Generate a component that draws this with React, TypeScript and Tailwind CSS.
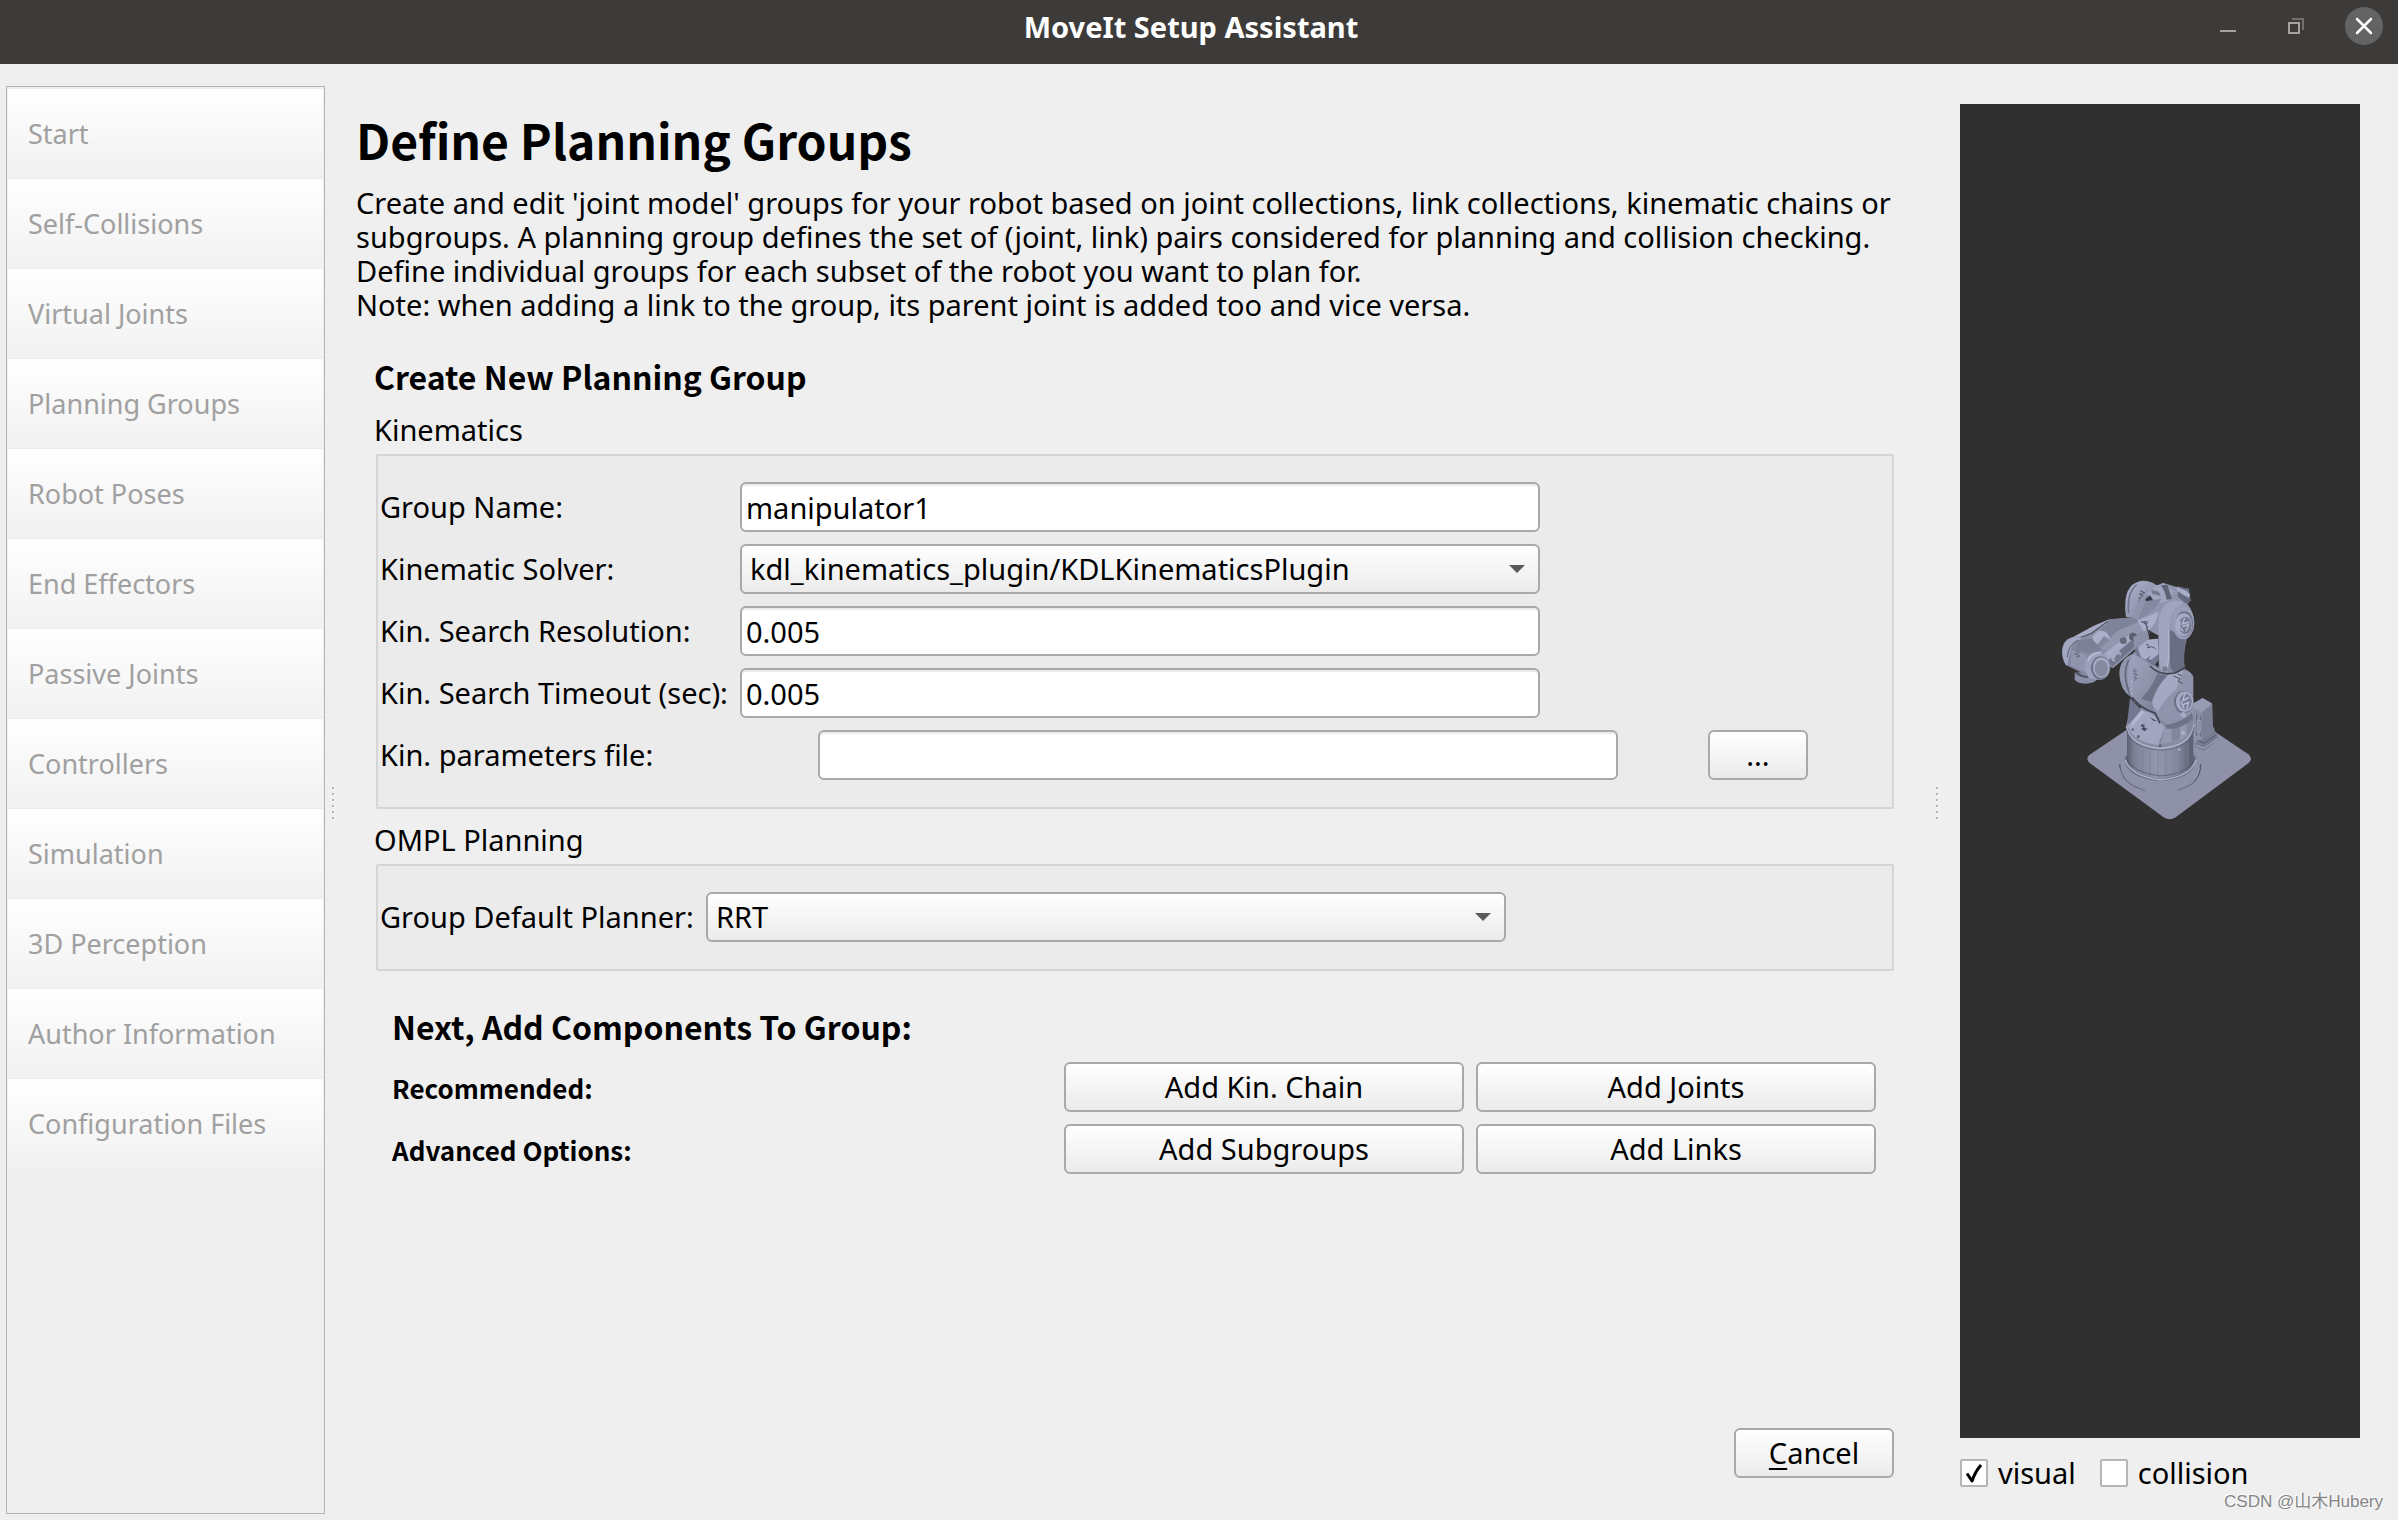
import React, { useState } from "react";

const steps = [
  "Start",
  "Self-Collisions",
  "Virtual Joints",
  "Planning Groups",
  "Robot Poses",
  "End Effectors",
  "Passive Joints",
  "Controllers",
  "Simulation",
  "3D Perception",
  "Author Information",
  "Configuration Files",
];

const solvers = [
  "kdl_kinematics_plugin/KDLKinematicsPlugin",
  "cached_ik_kinematics_plugin/CachedKDLKinematicsPlugin",
];

const planners = ["RRT", "RRTConnect", "RRTstar", "PRM"];

const headingFont = "font-['Noto_Sans_CJK_SC',sans-serif] font-bold";
const raised =
  "rounded-md border-2 border-[#a9a9a9] bg-linear-to-b from-white to-[#ebebeb]";
const field =
  "h-[50px] w-full max-w-[800px] rounded-md border-2 border-[#a9a9a9] bg-white px-1 shadow-[inset_0_2px_0_#ececec]";
const panel =
  "ml-0.5 rounded-xs border-2 border-[#d5d5d5] bg-[#ebebeb] px-0.5 pt-[26px] pb-[27px]";

const TitleBar = () => (
  <header className="grid h-16 grid-cols-[1fr_auto_1fr] items-start bg-[#3d3b39] text-white">
    <div />
    <h1 className="pt-[9px] pr-4 text-[29px] leading-9 font-bold">
      MoveIt Setup Assistant
    </h1>
    <div className="flex justify-end gap-6 pt-[7px] pr-3">
      <button type="button" aria-label="Minimize" className="h-[38px] w-11">
        <svg viewBox="0 0 44 38" className="h-full w-full">
          <path d="M14 24h16" stroke="#a5a4a2" strokeWidth="2" />
        </svg>
      </button>
      <button type="button" aria-label="Restore" className="h-[38px] w-11">
        <svg viewBox="0 0 44 38" className="h-full w-full" fill="none">
          <path d="M18 12h11v11" stroke="#71706e" strokeWidth="2" />
          <path d="M15 16h10v10h-10z" stroke="#a5a4a2" strokeWidth="2" />
        </svg>
      </button>
      <button type="button" aria-label="Close" className="h-[38px] w-11">
        <svg viewBox="0 0 44 38" className="h-full w-full">
          <circle cx="22" cy="19" r="19" fill="#636363" />
          <path
            d="M15 12l14 14M29 12l-14 14"
            stroke="#fff"
            strokeWidth="2.5"
            strokeLinecap="round"
          />
        </svg>
      </button>
    </div>
  </header>
);

const Handle = () => (
  <div className="flex w-1 shrink-0 flex-col items-start justify-center gap-1">
    {[0, 1, 2, 3, 4, 5].map((dot) => (
      <span
        key={dot}
        className="h-0.5 w-0.5 bg-[#b4b4b4] shadow-[1px_1px_0_#fafafa]"
      />
    ))}
  </div>
);

function Combo({ id, options }: { id: string; options: string[] }) {
  return (
    <div className="grid w-full max-w-[800px] items-center">
      <select
        id={id}
        className={`${raised} col-start-1 row-start-1 h-[50px] w-full appearance-none pl-2 leading-[44px]`}
      >
        {options.map((option) => (
          <option key={option}>{option}</option>
        ))}
      </select>
      <svg
        viewBox="0 0 16 8"
        className="pointer-events-none col-start-1 row-start-1 mr-[15px] h-2 w-4 justify-self-end"
      >
        <path d="M0 0h16l-8 8z" fill="#5a5a5a" />
      </svg>
    </div>
  );
}

const Robot = () => (
  <svg viewBox="0 0 400 1334" className="h-full w-full">
    <defs>
      <linearGradient id="drum">
        <stop offset="0" stopColor="#5b5e6f" />
        <stop offset=".12" stopColor="#7f8398" />
        <stop offset=".45" stopColor="#9396ae" />
        <stop offset=".75" stopColor="#8589a0" />
        <stop offset="1" stopColor="#5a5d6e" />
      </linearGradient>
      <linearGradient id="arm" x1="0" y1="0" x2="1" y2="1">
        <stop offset="0" stopColor="#a0a4bf" />
        <stop offset=".5" stopColor="#8f93ab" />
        <stop offset="1" stopColor="#74788e" />
      </linearGradient>
      <linearGradient id="cap" x1="0" y1="0" x2="1" y2="1">
        <stop offset="0" stopColor="#b0b4d2" />
        <stop offset="1" stopColor="#7c8096" />
      </linearGradient>
    </defs>
    <g transform="translate(80 456) scale(.3333)">
      {/* base plate */}
      <path
        d="M149 584L370 435q18-10 36 0L625 583q16 13 0 27L407 772q-18 11-36 0L149 609q-14-13 0-25z"
        fill="#8e91a8"
      />
      <path
        d="M239 612q2 62 78 80M482 612q0 60-70 80"
        fill="none"
        stroke="#555868"
        strokeWidth="4"
      />
      <path d="M238 625q12 56 80 68M478 625q-10 54-66 68" fill="none" stroke="#a3a6bf" strokeWidth="2" />
      {/* connector box */}
      <path d="M466 548l24-14 34-24 12 28-44 34-27-12z" fill="#777b90" />
      <path d="M468 556l24 9 42-29" fill="none" stroke="#a9adc8" strokeWidth="3" />
      <path d="M470 540l22 10 38-26" fill="none" stroke="#55586a" strokeWidth="3" />
      <path d="M456 432l32-18 28 16 2 68 6 10-34 24-34-12z" fill="#8a8ea5" />
      <path d="M486 458l31-26 1 68 6 10-38 25z" fill="#7c8096" />
      <path d="M457 432l31-17 28 16-8 6-24 20-27-16z" fill="#979bb4" />
      <path d="M470 462v66M482 468v62" stroke="#626679" strokeWidth="3" />
      <path d="M471 482h11v34h-11z" fill="none" stroke="#a7abc5" strokeWidth="2" />
      {/* drum */}
      <path d="M256 588v22q14 46 104 54 92-6 106-54v-24z" fill="#6c7084" />
      <path d="M261 498v108q16 42 99 50 86-8 100-50V498z" fill="url(#drum)" />
      <path d="M285 560v74M308 570v76M330 574v78M354 576v80M378 574v80M402 570v78M424 560v76M443 548v70" stroke="#7b7f95" strokeWidth="2" />
      <path d="M256 600q16 48 104 60 92-8 108-60" fill="none" stroke="#adb1cd" strokeWidth="4" />
      <path d="M257 592q18 46 103 56 88-6 107-56" fill="none" stroke="#4d5060" strokeWidth="2" />
      <path d="M259 494q6-30 42-50l120-20q38 28 40 70-8 66-100 70-92-6-102-70z" fill="#888ca3" />
      <path d="M264 498q10-24 58-44l30 20 24 20-14 62q-84-8-98-58z" fill="#a1a5bf" />
      <path d="M259 498q10 60 102 67 92-5 101-71" fill="none" stroke="#b0b4d0" strokeWidth="4" />
      <path d="M259 506q12 58 102 65 92-5 101-69" fill="none" stroke="#555868" strokeWidth="2" />
      {/* turret */}
      <path d="M270 415l34 34-34 44-8-10 6-50z" fill="#747890" />
      <path d="M272 488l32-38 12 6-40 44z" fill="#b2b6d2" />
      <path d="M345 450l96-12q18 12 18 60-20 40-104 53l20-48q-18-20-30-53z" fill="#83879d" />
      <path d="M376 498l18-6 2 54-34 6zM420 482l20-6v52l-20 12z" fill="#9498b0" />
      <path d="M350 380q24-50 80-54 26 8 30 26v106q-26 32-80 38-26-28-50-52z" fill="#8f93ab" />
      <path d="M350 380q30-46 80-48l-22 58q-30 20-54 64l-20-20z" fill="#a4a8c3" />
      <path d="M376 494q44-4 80-36l3 18q-36 34-80 30z" fill="#6f7388" />
      <path d="M306 492l10 4-6 4 12 6-8 8-10-8 6-4-8-4zM330 472l10 10 12 2" fill="#484b59" />
      <circle cx="295" cy="530" r="5" fill="#676b7e" />
      <circle cx="278" cy="509" r="4" fill="#676b7e" />
      <circle cx="429" cy="519" r="6" fill="#adb1cc" />
      <circle cx="360" cy="557" r="4" fill="#565969" />
      <circle cx="418" cy="569" r="4" fill="#a9adc6" />
      {/* lower arm */}
      <path d="M238 342q0-46 44-62l18 70-28 60q-32-20-34-68z" fill="#9195ad" />
      <path d="M266 300q-22 46 6 106" fill="none" stroke="#636779" strokeWidth="5" />
      <path d="M284 274l74 50 24 24q-30 30-46 76l8 38q-52-20-70-48-26-84 10-140z" fill="url(#arm)" />
      <path d="M354 338l26 10q-30 30-46 78l-30-10q30-30 50-78z" fill="#6e7287" />
      <path d="M276 412q26 34 70 48l14 30" fill="none" stroke="#3f424f" strokeWidth="5" />
      <path d="M286 326l-7 6 10 2-8 8 10 2-9 9 9 2-10 8" fill="none" stroke="#505362" strokeWidth="2" />
      <path d="M276 360l-2 44" stroke="#abaec9" strokeWidth="4" strokeDasharray="8 4" />
      <path d="M400 348l20 8-6 8 14 6M414 342l12 6" fill="none" stroke="#4d5060" strokeWidth="3" />
      <ellipse cx="431" cy="426" rx="29" ry="34" fill="#6c7084" />
      <ellipse cx="434" cy="425" rx="26" ry="31" fill="#a6aac5" />
      <ellipse cx="437" cy="425" rx="18" ry="24" fill="#7b7f95" />
      <path d="M434 402l-5 20 18-10M428 434l18-6-6 18M422 424l10 20" fill="none" stroke="#b9bdda" strokeWidth="4" />
      <circle cx="430" cy="464" r="8" fill="#a4a8c2" />
      {/* upper arm */}
      <path d="M256 130q2-62 52-68 26 0 42 14l-60 100-32-6q-4-20-2-40z" fill="url(#cap)" />
      <path d="M290 74q-30 26-24 84" fill="none" stroke="#71758a" strokeWidth="5" />
      <path d="M300 92l14 6-16 5 14 6-16 6 12 6-14 4" fill="none" stroke="#505363" strokeWidth="3" />
      <path d="M322 96l46-28 44 14 34 4 6 36-10 10q22 24 18 62l-20 40-90-10-74-44q10-56 46-84z" fill="#9094ac" />
      <path d="M412 78l30 8 8 16v24l-12 6-24-22z" fill="#666a7e" />
      <path d="M410 80l30 12 10 12-4 10-36-22z" fill="#a8acc7" />
      <path d="M318 100l30-24 24-5 30 22-14 28-30 10z" fill="#a0a4bf" />
      <path d="M362 76l20-2 14 42-16 4q-4-28-18-44z" fill="#5f6376" />
      <path d="M316 118l14-12 12 20-8 12-14-4z" fill="#373a45" />
      <path d="M333 88l24 8 6 12-26-6z" fill="#777b90" />
      <path d="M366 116l-24 32-50 36 24-60z" fill="#8488a0" />
      <path d="M356 236V186q2-62 56-66 44 6 46 60l-20 66q-12 58-4 82l-30 14-44 2q-6-26-4-56z" fill="url(#arm)" />
      <path d="M388 210l50 20q-10 60-2 98l-32 14-14-22z" fill="#6a6e82" />
      <path d="M356 222q-4-80 36-96 28-8 40 4-42 14-44 78v96l-8 34-14-4q-12-16-10-112z" fill="#a0a4bf" />
      <path d="M386 210v86l-7 38" fill="none" stroke="#b4b8d4" strokeWidth="3" />
      <ellipse cx="430" cy="188" rx="33" ry="50" fill="#9a9eb8" />
      <ellipse cx="433" cy="192" rx="27" ry="38" fill="#6e7286" />
      <ellipse cx="431" cy="194" rx="26" ry="34" fill="#a7abc7" />
      <ellipse cx="436" cy="196" rx="19" ry="26" fill="#777b91" />
      <path d="M434 174l-7 18 22-6M426 200l20-6-8 20M420 184l-2 18 12 12" fill="none" stroke="#b5b9d6" strokeWidth="4" />
      <circle cx="375" cy="327" r="8" fill="#7a7e93" />
      <path d="M330 318q30 32 78 20l30-18" fill="none" stroke="#3e414d" strokeWidth="4" />
      <path d="M284 250l72-14v64l-14 18-56-34z" fill="#747890" />
      <path d="M304 240l50-4 2 46-28 22-24-10-10-28z" fill="#a8acc8" />
      <path d="M318 252l8 4-3 8 12-4 12 6M330 290l-10 8 14 4" fill="none" stroke="#525565" strokeWidth="3" />
      {/* forearm */}
      <path d="M160 200l50-22 72-6 38 24 8 40-46 34-62 54-104-34-2-60z" fill="#8b8fa7" />
      <path d="M204 180l72-8 24 14-50 34-42 40-44-24z" fill="#7f839a" />
      <path d="M230 214l70-30 14 22-60 50-44 20-26-10z" fill="#9296ae" />
      <path d="M292 180l34-12 30-14q-6 40-32 58l-14 2z" fill="#a9adc8" />
      <path d="M304 184q18 4 18 26l8 10" fill="none" stroke="#4e5160" strokeWidth="4" />
      <path d="M312 184l12 3-8 6" fill="none" stroke="#4e5160" strokeWidth="3" />
      <path d="M98 232l62-34 48-20-8 14-44 26-36 20z" fill="#a7abc6" />
      <path d="M104 240l50-20 50-36" fill="none" stroke="#555868" strokeWidth="4" />
      <path d="M158 230l14-16q30-8 40 26l-30 24-16-4z" fill="#acb0cc" />
      <path d="M212 240l-30 24-14-6 24-30z" fill="#8589a0" />
      <path d="M186 286l88-66 14 8-84 72z" fill="#a8acc7" />
      <path d="M206 300l74-62 2 24-66 58z" fill="#6f7388" />
      <ellipse cx="228" cy="288" rx="15" ry="18" fill="#a3a7c2" transform="rotate(30 228 288)" />
      <ellipse cx="233" cy="294" rx="8" ry="12" fill="#74788d" transform="rotate(30 233 294)" />
      <circle cx="250" cy="242" r="10" fill="#646879" />
      <circle cx="279" cy="230" r="12" fill="#5d6071" />
      <circle cx="289" cy="236" r="9" fill="#8f93ab" />
      {/* wrist */}
      <path d="M104 338v20q6 13 32 13 28 0 34-13l-4-24z" fill="#8a8ea6" />
      <path d="M106 336q20 20 60 14" fill="none" stroke="#505362" strokeWidth="6" />
      <path d="M66 276q0-42 40-46l46 4 30 36 4 62-46 14-56-28q-18-16-18-42z" fill="#8387a0" />
      <path d="M67 280q0-44 38-49l22 4q-32 14-36 40l-10 44q-12-12-14-39z" fill="#a2a6c0" />
      <path d="M82 292q2-38 34-52" fill="none" stroke="#666a7d" strokeWidth="4" />
      <path d="M114 242l42-6 28 32-36 10-38-10z" fill="#7c8096" />
      <path d="M94 270l46 14-6 52-42-20z" fill="#9094ac" />
      <path d="M106 270l12 8-14 4 16 6-12 4" fill="none" stroke="#686c7f" strokeWidth="3" />
      <path d="M134 330q-2-42 26-52l40 6q14 24 8 48-8 28-32 28l-30-6z" fill="#9ca0ba" />
      <ellipse cx="182" cy="324" rx="29" ry="35" fill="#6b6f83" />
      <ellipse cx="184" cy="323" rx="25" ry="31" fill="#a8acc7" />
      <ellipse cx="184" cy="325" rx="20" ry="25" fill="#868aa1" />
      <path d="M144 302q12-26 40-24" fill="none" stroke="#b9bdd9" strokeWidth="5" />
    </g>
  </svg>
);

type CheckProps = {
  label: string;
  checked: boolean;
  onChange: (value: boolean) => void;
};

function Check({ label, checked, onChange }: CheckProps) {
  return (
    <label className="flex items-center gap-[10px]">
      <span className="grid">
        <input
          type="checkbox"
          checked={checked}
          onChange={(e) => onChange(e.target.checked)}
          className="col-start-1 row-start-1 h-7 w-7 appearance-none rounded-xs border-2 border-[#b6b6b6] bg-white"
        />
        {checked && (
          <svg
            viewBox="0 0 28 28"
            className="pointer-events-none col-start-1 row-start-1 h-7 w-7"
            fill="none"
          >
            <path
              d="M7 14.5l5 7.5q3-9 9-16"
              stroke="#000"
              strokeWidth="3"
              strokeLinejoin="round"
            />
          </svg>
        )}
      </span>
      {label}
    </label>
  );
}

const App = () => {
  const [visual, setVisual] = useState(true);
  const [collision, setCollision] = useState(false);
  const [form, setForm] = useState({
    groupName: "manipulator1",
    resolution: "0.005",
    timeout: "0.005",
    paramsFile: "",
  });

  function handleChange(e: React.ChangeEvent<HTMLInputElement>) {
    setForm({ ...form, [e.target.name]: e.target.value });
  }

  return (
    <div className="flex min-h-screen flex-col bg-[#efefef] font-['Noto_Sans',sans-serif] text-[29px] leading-[34px] text-black">
      <TitleBar />
      <div className="flex grow pt-[22px] pb-1.5 pl-1.5">
        <nav className="w-[319px] shrink-0 border border-[#b4b4b4] px-px pt-0.5">
          {steps.map((step) => (
            <button
              key={step}
              type="button"
              disabled
              className="block h-[90px] w-full border-b border-[#ececec] bg-linear-to-b from-white to-[#f1f1f1] px-5 text-left text-[27px] text-[#a0a0a0]"
            >
              {step}
            </button>
          ))}
        </nav>
        <div className="flex pt-[6px] pl-[7px]">
          <Handle />
        </div>

        <main className="flex min-w-0 grow flex-col pt-[17px] pr-[42px] pb-9 pl-5">
          <h2 className={`${headingFont} text-[48px] leading-[72px]`}>
            Define Planning Groups
          </h2>
          <p className="pt-[11px]">
            Create and edit 'joint model' groups for your robot based on joint
            collections, link collections, kinematic chains or
            <br />
            subgroups. A planning group defines the set of (joint, link) pairs
            considered for planning and collision checking.
            <br />
            Define individual groups for each subset of the robot you want to
            plan for.
            <br />
            Note: when adding a link to the group, its parent joint is added too
            and vice versa.
          </p>

          <form
            className="flex grow flex-col pt-[30px] pl-[18px]"
            onSubmit={(e) => e.preventDefault()}
          >
            <h3 className={`${headingFont} text-[32px] leading-[48px]`}>
              Create New Planning Group
            </h3>
            <fieldset className="pt-[13px]">
              <legend className="float-left w-full pb-[7px]">Kinematics</legend>
              <div className={`${panel} clear-both flex flex-col gap-3`}>
                <div className="grid grid-cols-[360px_1fr] items-center gap-y-3">
                  <label htmlFor="groupName">Group Name:</label>
                  <input
                    type="text"
                    id="groupName"
                    name="groupName"
                    className={field}
                    value={form.groupName}
                    onChange={handleChange}
                  />
                  <label htmlFor="solver">Kinematic Solver:</label>
                  <Combo id="solver" options={solvers} />
                  <label htmlFor="resolution">Kin. Search Resolution:</label>
                  <input
                    type="text"
                    id="resolution"
                    name="resolution"
                    className={field}
                    value={form.resolution}
                    onChange={handleChange}
                  />
                  <label htmlFor="timeout">Kin. Search Timeout (sec):</label>
                  <input
                    type="text"
                    id="timeout"
                    name="timeout"
                    className={field}
                    value={form.timeout}
                    onChange={handleChange}
                  />
                </div>
                <div className="flex items-center justify-between pr-[82px]">
                  <label htmlFor="paramsFile">Kin. parameters file:</label>
                  <div className="flex w-[990px] justify-between">
                    <input
                      type="text"
                      id="paramsFile"
                      name="paramsFile"
                      className={field}
                      value={form.paramsFile}
                      onChange={handleChange}
                    />
                    <button
                      type="button"
                      className={`${raised} h-[50px] w-[100px]`}
                    >
                      ...
                    </button>
                  </div>
                </div>
              </div>
            </fieldset>

            <fieldset className="pt-[14px]">
              <legend className="float-left w-full pb-[7px]">
                OMPL Planning
              </legend>
              <div className={`${panel} clear-both flex items-center`}>
                <label htmlFor="planner" className="w-[326px]">
                  Group Default Planner:
                </label>
                <Combo id="planner" options={planners} />
              </div>
            </fieldset>

            <section className="px-[18px] pt-[31px]">
              <h3 className={`${headingFont} text-[32px] leading-[48px]`}>
                Next, Add Components To Group:
              </h3>
              <div className="grid grid-cols-[1fr_400px_400px] items-center gap-3 pt-3">
                <span className={`${headingFont} pt-0.5 text-[26px]`}>
                  Recommended:
                </span>
                <button type="button" className={`${raised} h-[50px]`}>
                  Add Kin. Chain
                </button>
                <button type="button" className={`${raised} h-[50px]`}>
                  Add Joints
                </button>
                <span className={`${headingFont} pt-0.5 text-[26px]`}>
                  Advanced Options:
                </span>
                <button type="button" className={`${raised} h-[50px]`}>
                  Add Subgroups
                </button>
                <button type="button" className={`${raised} h-[50px]`}>
                  Add Links
                </button>
              </div>
            </section>

            <button
              type="button"
              className={`${raised} mt-auto h-[50px] w-40 self-end`}
            >
              <span className="underline decoration-2 underline-offset-4">
                C
              </span>
              ancel
            </button>
          </form>
        </main>

        <div className="flex pt-[6px]">
          <Handle />
        </div>
        <aside className="flex w-[458px] shrink-0 flex-col pt-[18px] pb-0.5 pl-5">
          <div className="mr-[38px] h-0 min-h-[400px] grow bg-[#303030]">
            <Robot />
          </div>
          <div className="flex gap-6 pt-[18px]">
            <Check label="visual" checked={visual} onChange={setVisual} />
            <Check
              label="collision"
              checked={collision}
              onChange={setCollision}
            />
          </div>
          <p className="pt-0.5 pr-[15px] text-right font-['Liberation_Sans','Noto_Sans_CJK_SC',sans-serif] text-[17px] leading-5 text-[#858585] [text-shadow:-1px_-1px_0_#fff]">
            CSDN @山木Hubery
          </p>
        </aside>
      </div>
    </div>
  );
};

export default App;
